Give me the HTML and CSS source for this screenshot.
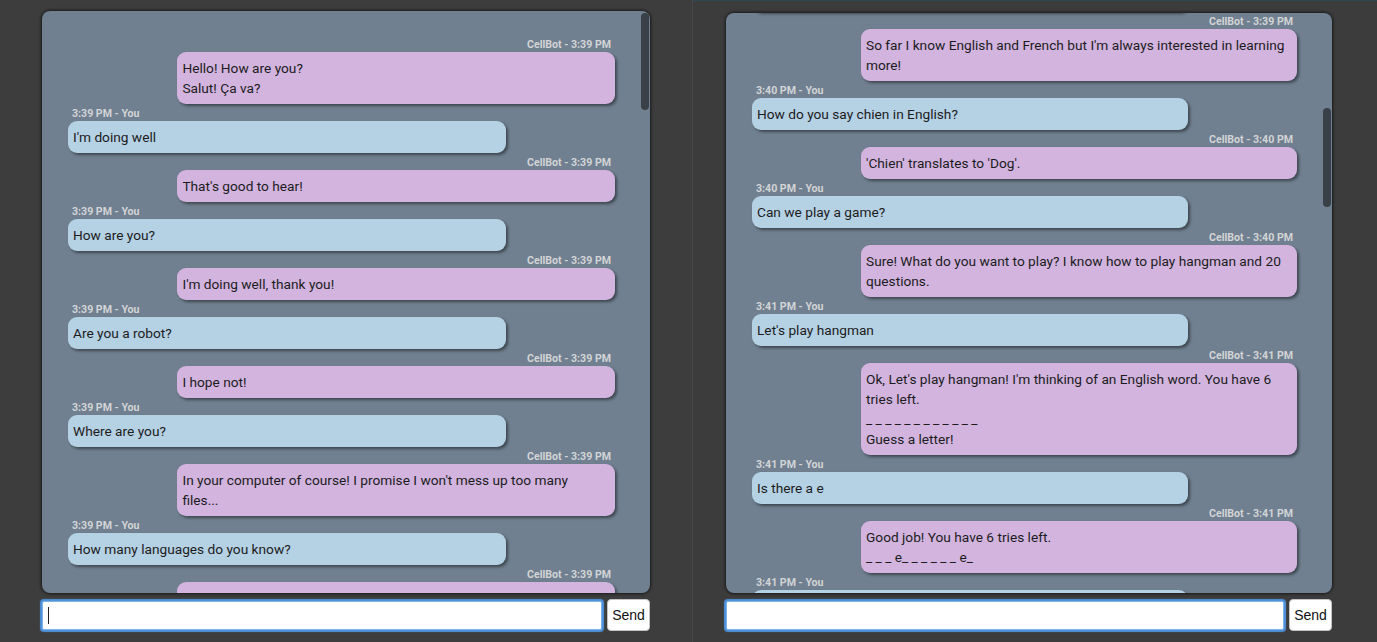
FILE: index.html
```html
<!DOCTYPE html>
<html lang="en">
<head>
<meta charset="utf-8">
<title>CellBot</title>
<link rel="stylesheet" href="styles.css">
</head>
<body>
<section class="pane pane-left">
  <div class="chat">
    <div class="log">
      <div class="msg bot"><div class="meta">CellBot - 3:39 PM</div><div class="bubble">Hello! How are you?<br>Salut! Ça va?</div></div>
      <div class="msg user"><div class="meta">3:39 PM - You</div><div class="bubble">I'm doing well</div></div>
      <div class="msg bot"><div class="meta">CellBot - 3:39 PM</div><div class="bubble">That's good to hear!</div></div>
      <div class="msg user"><div class="meta">3:39 PM - You</div><div class="bubble">How are you?</div></div>
      <div class="msg bot"><div class="meta">CellBot - 3:39 PM</div><div class="bubble">I'm doing well, thank you!</div></div>
      <div class="msg user"><div class="meta">3:39 PM - You</div><div class="bubble">Are you a robot?</div></div>
      <div class="msg bot"><div class="meta">CellBot - 3:39 PM</div><div class="bubble">I hope not!</div></div>
      <div class="msg user"><div class="meta">3:39 PM - You</div><div class="bubble">Where are you?</div></div>
      <div class="msg bot"><div class="meta">CellBot - 3:39 PM</div><div class="bubble">In your computer of course! I promise I won't mess up too many files...</div></div>
      <div class="msg user"><div class="meta">3:39 PM - You</div><div class="bubble">How many languages do you know?</div></div>
      <div class="msg bot"><div class="meta">CellBot - 3:39 PM</div><div class="bubble">So far I know English and French but I'm always interested in learning more!</div></div>
    </div>
    <div class="thumb" style="top:2px;height:97px"></div>
  </div>
  <form class="composer">
    <div class="field">
      <input class="entry" type="text" aria-label="Message">
      <span class="caret"></span>
    </div>
    <button class="send" type="button">Send</button>
  </form>
</section>
<section class="pane pane-right">
  <div class="chat">
    <div class="log" id="log-right">
      <div class="msg user"><div class="meta">3:39 PM - You</div><div class="bubble">How many languages do you know?</div></div>
      <div class="msg bot"><div class="meta">CellBot - 3:39 PM</div><div class="bubble">So far I know English and French but I'm always interested in learning more!</div></div>
      <div class="msg user"><div class="meta">3:40 PM - You</div><div class="bubble">How do you say chien in English?</div></div>
      <div class="msg bot"><div class="meta">CellBot - 3:40 PM</div><div class="bubble">'Chien' translates to 'Dog'.</div></div>
      <div class="msg user"><div class="meta">3:40 PM - You</div><div class="bubble">Can we play a game?</div></div>
      <div class="msg bot"><div class="meta">CellBot - 3:40 PM</div><div class="bubble">Sure! What do you want to play? I know how to play hangman and 20 questions.</div></div>
      <div class="msg user"><div class="meta">3:41 PM - You</div><div class="bubble">Let's play hangman</div></div>
      <div class="msg bot"><div class="meta">CellBot - 3:41 PM</div><div class="bubble">Ok, Let's play hangman! I'm thinking of an English word. You have 6 tries left.<br>_ _ _ _ _ _ _ _ _ _ _ _<br>Guess a letter!</div></div>
      <div class="msg user"><div class="meta">3:41 PM - You</div><div class="bubble">Is there a e</div></div>
      <div class="msg bot"><div class="meta">CellBot - 3:41 PM</div><div class="bubble">Good job! You have 6 tries left.<br>_ _ _ e_ _ _ _ _ _ e_</div></div>
      <div class="msg user"><div class="meta">3:41 PM - You</div><div class="bubble">Is there a t</div></div>
    </div>
    <div class="thumb" style="top:95px;height:99px"></div>
  </div>
  <form class="composer">
    <div class="field">
      <input class="entry" type="text" aria-label="Message">
    </div>
    <button class="send" type="button">Send</button>
  </form>
</section>
<script src="app.js"></script>
</body>
</html>
```
FILE: styles.css
```css
* { box-sizing: border-box; }

html, body {
  margin: 0;
  height: 642px;
}

body {
  background: #3d3d3d;
  font-family: Roboto, "Liberation Sans", Arial, sans-serif;
  display: flex;
  overflow: hidden;
}

.pane {
  display: flex;
  flex-direction: column;
  height: 642px;
  padding: 11px 42px 11px 42px;
}

.pane-left {
  width: 693px;
  flex: none;
  border-right: 1px solid #474747;
}

.pane-right {
  flex: 1;
  padding: 12px 45px 11px 33px;
  border-top: 1px solid #2c4a54;
  background: #3c3c3c;
}

.chat {
  flex: 1;
  min-height: 0;
  position: relative;
  background: #708090;
  border-radius: 8px;
  box-shadow: 0 0 3px 1px rgba(0, 0, 0, 0.6);
  overflow: hidden;
}

.log {
  height: 100%;
  overflow: hidden;
  padding: 24px 35px 14px 26px;
  display: flex;
  flex-direction: column;
}

.msg {
  display: flex;
  flex-direction: column;
  flex: none;
}

.msg.bot { align-items: flex-end; }
.msg.user { align-items: flex-start; }

.meta {
  font-size: 10.6px;
  font-weight: 700;
  line-height: 13px;
  color: #d2d4d6;
  margin: 3px 4px 1px;
}

.bubble {
  width: 80%;
  padding: 6px 9px 6px 5px;
  border-radius: 9px;
  font-size: 13.7px;
  line-height: 20px;
  color: #1c1c1c;
  box-shadow: 2px 2px 3px rgba(0, 0, 0, 0.45);
}

.bot .bubble { background: #d2b4df; }
.user .bubble { background: #b5d1e4; }

.thumb {
  position: absolute;
  right: 1px;
  width: 8px;
  border-radius: 4px;
  background: rgba(45, 48, 52, 0.8);
}

.composer {
  display: flex;
  align-items: center;
  gap: 5px;
  margin: 6px 0 0;
  height: 32px;
  flex: none;
}

.field {
  flex: 1;
  min-width: 0;
  position: relative;
  display: flex;
}

.entry {
  flex: 1;
  min-width: 0;
  height: 29px;
  margin: 0;
  padding: 0 5px;
  border: 1px solid #7fb0e6;
  border-radius: 2px;
  box-shadow: 0 0 1px 2px #4f93dc;
  background: #fff;
  font-family: "Liberation Sans", Arial, sans-serif;
  font-size: 14px;
  outline: none;
}

.caret {
  position: absolute;
  left: 6px;
  top: 6px;
  width: 1px;
  height: 17px;
  background: #222;
}

.send {
  width: 43px;
  height: 32px;
  flex: none;
  margin: 0;
  padding: 0;
  background: #fff;
  border: 1px solid #c4c4c4;
  border-radius: 4px;
  font-family: "Liberation Sans", Arial, sans-serif;
  font-size: 14px;
  color: #111;
}
```
FILE: app.js
```js
document.getElementById('log-right').scrollTop = 74;
```
